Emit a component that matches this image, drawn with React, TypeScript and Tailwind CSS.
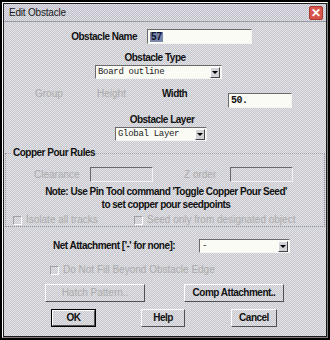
import React from "react";

const dither = "bg-[image:repeating-conic-gradient(#c6c6ce_0_25%,#e4e4e6_0_50%)] bg-[length:2px_2px]";
const F = "font-['Liberation_Sans',Arial,sans-serif]";
const M = "font-['Liberation_Mono','Courier_New',monospace]";
const lbl = `${F} text-[10px] font-bold leading-none tracking-[-0.5px] text-[#111] whitespace-nowrap`;
const dis = `${F} text-[10px] leading-none text-[#ababab] whitespace-nowrap`;

function Field({ w, h = 15, children, disabled }: { w: number; h?: number; children?: React.ReactNode; disabled?: boolean }) {
  return (
    <div
      style={{ width: w, height: h }}
      className={`border-t border-l border-t-[#6a6a6a] border-l-[#6a6a6a] border-b border-r border-b-[#f4f4f4] border-r-[#f4f4f4] ${disabled ? "" : "bg-[#fbfbf6]"} flex items-center pl-[2px]`}
    >
      {children}
    </div>
  );
}

function Combo({ w, text }: { w: number; text: string }) {
  return (
    <div
      style={{ width: w }}
      className="h-[14px] border-t border-l border-t-[#6a6a6a] border-l-[#6a6a6a] border-b border-r border-b-[#f4f4f4] border-r-[#f4f4f4] bg-[#fbfbf6] flex items-center"
    >
      <span className={`${M} text-[9px] tracking-[-0.3px] leading-none text-[#222] pl-[2px] flex-1 whitespace-pre`}>{text}</span>
      <div className="w-[10px] h-[11px] mr-[1px] bg-[#d4d4d8] border-t border-l border-white border-b border-r border-b-[#444] border-r-[#444] flex items-center justify-center">
        <div className="w-0 h-0 border-l-[3px] border-r-[3px] border-t-[3px] border-l-transparent border-r-transparent border-t-black" />
      </div>
    </div>
  );
}

function Check({ label, className = "" }: { label: string; className?: string }) {
  return (
    <div className={`flex items-center ${className}`}>
      <div className="w-[9px] h-[9px] border-t border-l border-t-[#a0a0a0] border-l-[#a0a0a0] border-b border-r border-b-white border-r-white" />
      <span className={`${dis} ml-[4px]`}>{label}</span>
    </div>
  );
}

function Btn({ w, label, disabled, def }: { w: number; label: string; disabled?: boolean; def?: boolean }) {
  const inner = (
    <div
      style={{ width: def ? w - 2 : w }}
      className={`${def ? "h-[16px]" : "h-[18px]"} flex items-center justify-center border-t border-l border-white border-b border-r border-b-[#505050] border-r-[#505050] ${disabled ? dis : lbl}`}
    >
      {label}
    </div>
  );
  if (def) return <div className="border border-black">{inner}</div>;
  return inner;
}

export default function App() {
  return (
    <div className={`w-[330px] h-[340px] bg-black p-[2px]`}>
      <div className="w-full h-full border-l border-t border-white border-r border-b border-r-[#808080] border-b-[#808080] bg-black">
        <div className={`w-full h-full ${dither} flex flex-col border border-[#1a1a1a]`}>
          {/* title bar */}
          <div className="h-[18px] flex items-center justify-between pl-[5px] pr-[3px] border-b border-b-[#9a9aa4] bg-[image:repeating-conic-gradient(#bebec8_0_25%,#e2e2e8_0_50%)] bg-[length:2px_2px]">
            <span className={`${F} text-[10px] leading-none tracking-[-0.2px] text-[#1a1a1a]`}>Edit Obstacle</span>
            <div className="w-[14px] h-[14px] rounded-[2px] bg-[#d8544a] border border-[#a83a30] flex items-center justify-center text-white text-[12px] font-bold leading-none">✕</div>
          </div>

          {/* Obstacle Name */}
          <div className="flex items-center mt-[7px] h-[15px]">
            <span className={`${lbl} w-[133px] text-right`}>Obstacle Name</span>
            <div className="ml-[10px]">
              <Field w={105}>
                <span className={`${F} text-[10px] font-bold leading-none bg-[#7a86a8] text-[#101030] px-[1px]`}>57</span>
              </Field>
            </div>
          </div>

          {/* Obstacle Type */}
          <div className="flex justify-center mt-[9px] pr-[20px]">
            <span className={lbl}>Obstacle Type</span>
          </div>
          <div className="ml-[91px] mt-[2px]">
            <Combo w={127} text="Board outline" />
          </div>

          {/* Group Height Width */}
          <div className="flex items-start mt-[10px] h-[16px]">
            <span className={`${dis} ml-[31px] w-[62px]`}>Group</span>
            <span className={`${dis} w-[65px]`}>Height</span>
            <span className={`${lbl} w-[66px]`}>Width</span>
            <div className="mt-[4px]">
              <Field w={64}>
                <span className={`${M} text-[10px] font-bold leading-none tracking-[-0.5px] text-[#111]`}>50.</span>
              </Field>
            </div>
          </div>

          {/* Obstacle Layer */}
          <div className="flex justify-center mt-[10px] pr-[6px]">
            <span className={lbl}>Obstacle Layer</span>
          </div>
          <div className="ml-[111px] mt-[2px]">
            <Combo w={92} text="Global Layer" />
          </div>

          {/* Copper Pour Rules group */}
          <div className="relative mx-[1px] mt-[12px] h-[74px] border border-dotted border-[#9a9aa6]">
            <span className={`${lbl} absolute left-[6px] -top-[6px] px-[1px] ${dither}`}>Copper Pour Rules</span>
            <div className="flex items-center mt-[13px] h-[15px]">
              <span className={`${dis} ml-[28px] w-[56px]`}>Clearance</span>
              <Field w={63} disabled />
              <span className={`${dis} ml-[31px] w-[46px]`}>Z order</span>
              <Field w={63} disabled />
            </div>
            <div className="flex flex-col items-center mt-[5px] gap-[3px] pl-[2px]">
              <span className={lbl}>Note: Use Pin Tool command 'Toggle Copper Pour Seed'</span>
              <span className={lbl}>to set copper pour seedpoints</span>
            </div>
            <div className="flex items-center mt-[5px]">
              <div className="ml-[7px] w-[121px]"><Check label="Isolate all tracks" /></div>
              <Check label="Seed only from designated object" />
            </div>
          </div>

          {/* Net Attachment */}
          <div className="flex items-center mt-[12px] h-[14px]">
            <span className={`${lbl} ml-[49px] w-[146px]`}>Net Attachment ['-' for none]:</span>
            <Combo w={91} text="-" />
          </div>

          <Check label="Do Not Fill Beyond Obstacle Edge" className="ml-[46px] mt-[12px]" />

          <div className="flex mt-[9px]">
            <div className="ml-[41px]"><Btn w={100} label="Hatch Pattern.." disabled /></div>
            <div className="ml-[39px]"><Btn w={100} label="Comp Attachment.." /></div>
          </div>

          <div className="flex mt-[7px]">
            <div className="ml-[47px]"><Btn w={45} label="OK" def /></div>
            <div className="ml-[45px]"><Btn w={44} label="Help" /></div>
            <div className="ml-[46px]"><Btn w={46} label="Cancel" /></div>
          </div>
        </div>
      </div>
    </div>
  );
}
